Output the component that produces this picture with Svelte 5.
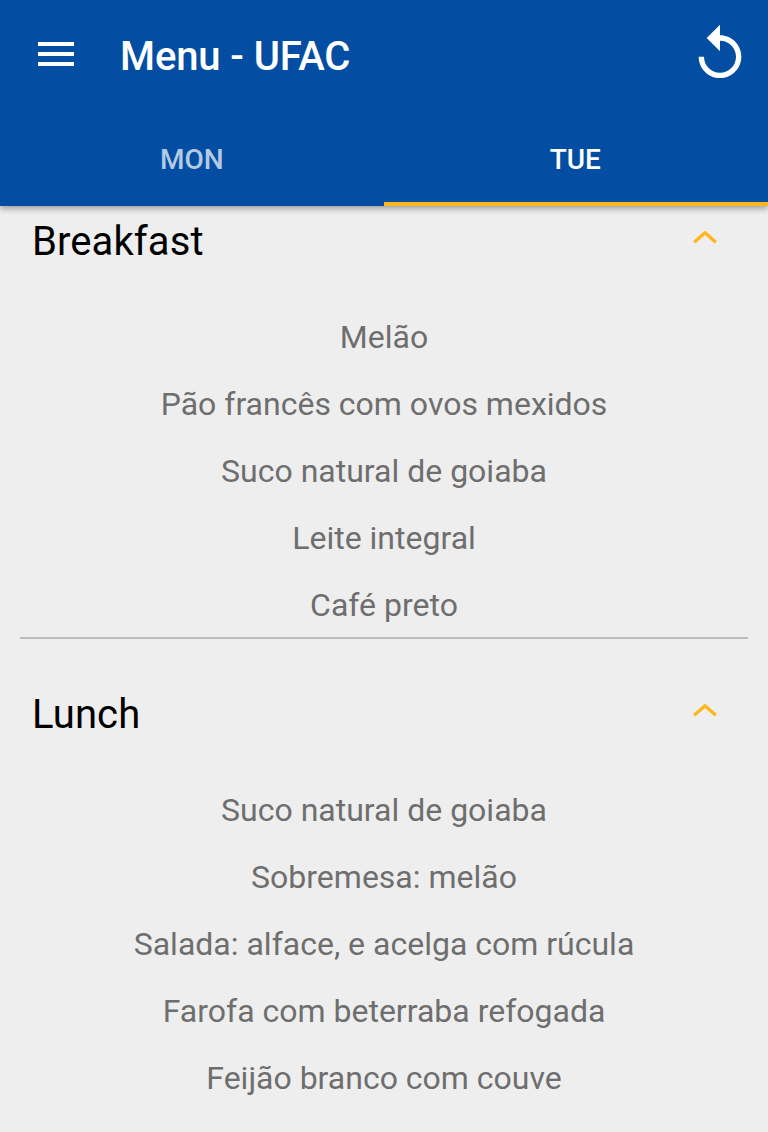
<script>
  const tabs = [{ label: 'MON', active: false }, { label: 'TUE', active: true }];
  const meals = [
    { name: 'Breakfast', items: ['Melão', 'Pão francês com ovos mexidos', 'Suco natural de goiaba', 'Leite integral', 'Café preto'] },
    { name: 'Lunch', items: ['Suco natural de goiaba', 'Sobremesa: melão', 'Salada: alface, e acelga com rúcula', 'Farofa com beterraba refogada', 'Feijão branco com couve'] }
  ];
</script>

<div class="screen">
  <header>
    <div class="toolbar">
      <svg class="menu" width="36" height="24" viewBox="0 0 36 24" fill="#fff"><path d="M0 0h36v4H0zM0 10h36v4H0zM0 20h36v4H0z" /></svg>
      <h1>Menu - UFAC</h1>
      <svg class="reload" width="64" height="64" viewBox="0 0 24 24" fill="#fff"><path d="M12 5V1L7 6l5 5V7c3.31 0 6 2.69 6 6s-2.69 6-6 6-6-2.69-6-6H4c0 4.42 3.58 8 8 8s8-3.58 8-8-3.58-8-8-8z" /></svg>
    </div>
    <nav>
      {#each tabs as tab}
        <button class:active={tab.active}>{tab.label}</button>
      {/each}
    </nav>
  </header>
  <main>
    {#each meals as meal}
      <section>
        <div class="heading">
          <h2>{meal.name}</h2>
          <svg width="24" height="14" viewBox="0 0 24 14" fill="none" stroke="#ffb61c" stroke-width="3.4" stroke-linejoin="round"><path d="M1.2 12.2 12 2.7 22.8 12.2" /></svg>
        </div>
        <ul>
          {#each meal.items as item}<li>{item}</li>{/each}
        </ul>
      </section>
    {/each}
  </main>
</div>

<style>
  :global(body) { background: #eee; }
  .screen { height: 1132px; overflow: hidden; background: #eee; font-family: Roboto, sans-serif; }
  header { position: relative; height: 206px; background: #034ea2; box-shadow: 0 3px 6px rgba(0, 0, 0, .32); }
  .toolbar { display: flex; align-items: center; height: 112px; padding: 0 16px 0 38px; box-sizing: border-box; }
  .menu { margin-top: -4px; }
  h1 { margin: 2px 0 0 46px; flex: 1; color: #fff; font-size: 40px; font-weight: 500; line-height: 48px; letter-spacing: -.1px; }
  .reload { margin: -4px 0 0; }
  nav { display: flex; height: 94px; }
  button { flex: 1; padding: 4px 0 0; border: 0; border-bottom: 4px solid transparent; background: none; color: #b3cae3; font: 500 28px Roboto, sans-serif; }
  .active { padding-right: 1px; color: #fff; border-color: #ffb61c; }
  main { padding-top: 1px; }
  section { height: 432px; margin: 0 20px 41px; border-bottom: 2px solid #bdbdbd; box-sizing: border-box; }
  section:last-child { border-bottom: 0; }
  .heading { display: flex; justify-content: space-between; align-items: center; height: 70px; padding: 0 31px 0 12px; }
  .heading svg { margin-top: -10px; }
  h2 { margin: 0; color: #000; font-size: 40px; font-weight: 400; line-height: 48px; letter-spacing: .1px; }
  ul { margin: 0; padding: 27px 0 0; list-style: none; text-align: center; }
  li { height: 67px; color: #6e6e6e; font-size: 32px; line-height: 67px; }
</style>
